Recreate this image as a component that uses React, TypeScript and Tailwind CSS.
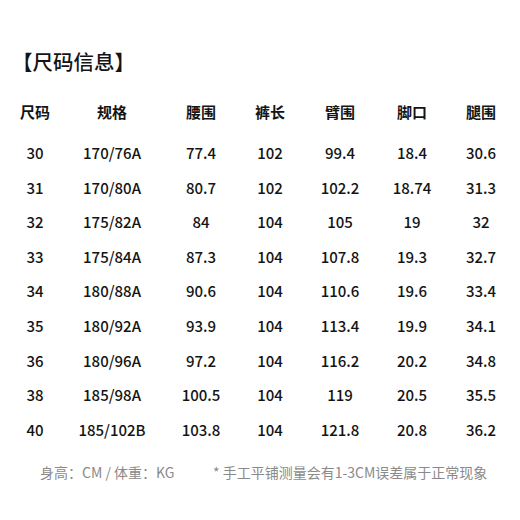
const headers = ["尺码", "规格", "腰围", "裤长", "臂围", "脚口", "腿围"];

const rows = [
  ["30", "170/76A", "77.4", "102", "99.4", "18.4", "30.6"],
  ["31", "170/80A", "80.7", "102", "102.2", "18.74", "31.3"],
  ["32", "175/82A", "84", "104", "105", "19", "32"],
  ["33", "175/84A", "87.3", "104", "107.8", "19.3", "32.7"],
  ["34", "180/88A", "90.6", "104", "110.6", "19.6", "33.4"],
  ["35", "180/92A", "93.9", "104", "113.4", "19.9", "34.1"],
  ["36", "180/96A", "97.2", "104", "116.2", "20.2", "34.8"],
  ["38", "185/98A", "100.5", "104", "119", "20.5", "35.5"],
  ["40", "185/102B", "103.8", "104", "121.8", "20.8", "36.2"],
];

const grid =
  "grid grid-cols-[50px_104px_74px_64px_76px_68px_70px] items-center text-center";

export default function App() {
  return (
    <div
      className="w-[520px] h-[520px] bg-white text-[#141414] overflow-hidden"
      style={{ fontFamily: '"Noto Sans CJK SC", "Noto Sans", sans-serif' }}
    >
      <div className="pt-[47px] pl-[12px] text-[20.5px] leading-[28px] font-medium">
        【尺码信息】
      </div>

      <div className="pl-[10px] mt-[20px]">
        <div className={`${grid} h-[34px] mb-[7px] text-[15px] font-bold`}>
          {headers.map((h) => (
            <div key={h}>{h}</div>
          ))}
        </div>
        {rows.map((r) => (
          <div key={r[0]} className={`${grid} h-[34.6px] text-[15px] font-medium`}>
            {r.map((c, i) => (
              <div key={i}>{c}</div>
            ))}
          </div>
        ))}
      </div>

      <div className="mt-[15px] flex text-[14px] leading-[20px] text-[#8a8a8a]">
        <span className="pl-[40px] w-[213px]">身高：CM / 体重：KG</span>
        <span>* 手工平铺测量会有1-3CM误差属于正常现象</span>
      </div>
    </div>
  );
}
